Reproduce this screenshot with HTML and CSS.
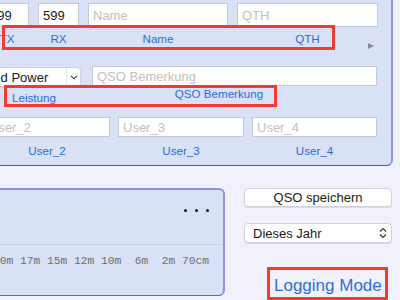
FILE: index.html
```html
<!DOCTYPE html>
<html lang="de">
<head>
  <meta charset="UTF-8">
  <meta name="viewport" content="width=device-width, initial-scale=1.0">
  <title>QSO Logging</title>
  <link rel="stylesheet" href="styles.css">
</head>
<body>
  <!-- QSO entry panel -->
  <div class="entry-panel">
    <div class="grid-call">
      <input type="text" class="field" value="599">
      <input type="text" class="field" value="599">
      <input type="text" class="field" placeholder="Name">
      <input type="text" class="field" placeholder="QTH">
    </div>
    <div class="grid-call labels-call">
      <span class="tag">TX</span>
      <span class="tag">RX</span>
      <span class="tag">Name</span>
      <span class="tag tag-qth">
        <span></span>
        <span>QTH</span>
        <span class="disclosure"></span>
      </span>
    </div>

    <div class="row-power">
      <div class="popup">
        <span class="popup-text">Fixed Power</span>
        <span class="popup-arrow">
          <svg width="8" height="5" viewBox="0 0 8 5"><path d="M1 0.8 L4 3.8 L7 0.8" fill="none" stroke="#333" stroke-width="1.1"/></svg>
        </span>
      </div>
      <input type="text" class="field field-note" placeholder="QSO Bemerkung">
    </div>
    <div class="labels-power">
      <span class="tag tag-power">Leistung</span>
      <span class="tag tag-note">QSO Bemerkung</span>
    </div>

    <div class="grid-user">
      <input type="text" class="field" placeholder="User_2">
      <input type="text" class="field" placeholder="User_3">
      <input type="text" class="field" placeholder="User_4">
    </div>
    <div class="grid-user labels-user">
      <span class="tag">User_2</span>
      <span class="tag">User_3</span>
      <span class="tag">User_4</span>
    </div>

    <!-- annotation frames -->
    <div class="mark mark-call"></div>
    <div class="mark mark-power"></div>
  </div>

  <div class="bottom">
    <!-- band overview -->
    <div class="band-panel">
      <div class="band-head">
        <span class="dot"></span><span class="dot"></span><span class="dot"></span>
      </div>
      <div class="band-list">20m 17m 15m 12m 10m  6m  2m 70cm</div>
    </div>

    <div class="side">
      <button class="btn">QSO speichern</button>
      <div class="stepper">
        <span>Dieses Jahr</span>
        <svg width="8" height="12" viewBox="0 0 8 12"><path d="M1 4.5 L4 1.5 L7 4.5 M1 7.5 L4 10.5 L7 7.5" fill="none" stroke="#333" stroke-width="1.1"/></svg>
      </div>
      <div class="mode-box">
        <a class="mode-link" href="#">Logging Mode</a>
      </div>
    </div>
  </div>
</body>
</html>
```

FILE: styles.css
```css
/* General */
body {
  margin: 0;
  padding: 0;
  width: 400px;
  height: 300px;
  overflow: hidden;
  background-color: #f1f1fb;
  font-family: "Liberation Sans", Arial, sans-serif;
}

.entry-panel {
  position: relative;
  box-sizing: border-box;
  width: 393px;
  height: 166px;
  padding-top: 3px;
  background: #d8e1f5;
  border-right: 2px solid #9193e2;
  border-bottom: 1px solid #4a56d8;
  border-bottom-right-radius: 6px;
}

.field {
  box-sizing: border-box;
  height: 24px;
  padding: 0 4px;
  font-family: inherit;
  font-size: 13px;
  color: #1a1a1a;
  background: #fff;
  border: 1px solid #c4c9d6;
  border-radius: 0;
  outline: none;
  width: 100%;
}

.field::placeholder {
  color: #c2c2c2;
}

.tag {
  font-size: 11.6px;
  line-height: 13px;
  color: #2b6cdd;
  text-align: center;
}

/* first row: TX / RX / Name / QTH */
.grid-call {
  display: grid;
  grid-template-columns: 44px 41px 140px 141px;
  column-gap: 9px;
  margin-left: -15px;
}

.labels-call {
  height: 18px;
  margin-top: 5px;
}

.tag-qth {
  display: grid;
  grid-template-columns: 1fr auto 1fr;
}

.disclosure {
  justify-self: end;
  align-self: end;
  width: 0;
  height: 0;
  margin: 0 4px 1px 0;
  border-top: 3.5px solid transparent;
  border-bottom: 3.5px solid transparent;
  border-left: 6px solid #8c8c8c;
}

/* second row: power / remark */
.row-power {
  display: flex;
  align-items: flex-start;
  margin-top: 16px;
  margin-left: -30px;
}

.popup {
  box-sizing: border-box;
  display: flex;
  align-items: center;
  width: 111px;
  height: 20px;
  margin-top: 1px;
  background: #fff;
  border: 1px solid #cfd3dc;
  border-radius: 4px;
  box-shadow: 0 1px 1px rgba(0, 0, 0, 0.08);
  font-size: 13px;
  color: #1a1a1a;
}

.popup-text {
  flex: 1;
  padding-left: 5px;
}

.popup-arrow {
  display: flex;
  align-items: center;
  justify-content: center;
  width: 13px;
  height: 100%;
  border-left: 1px solid #e4e6ec;
}

.field-note {
  width: 285px;
  height: 20px;
  margin-left: 11px;
}

.labels-power {
  display: flex;
  align-items: flex-start;
  height: 20px;
}

.tag-power {
  margin: 4px 0 0 12px;
}

.tag-note {
  margin-left: 119px;
}

/* third row: user fields */
.grid-user {
  display: grid;
  grid-template-columns: 126px 126px 125px;
  column-gap: 8px;
  margin-left: -16px;
}

.grid-user .field {
  height: 20px;
  margin-top: 10px;
}

.labels-user {
  margin-top: 7px;
}

/* red annotation frames */
.mark {
  position: absolute;
  border: 3px solid #f23b2f;
}

.mark-call {
  left: 2px;
  top: 25px;
  width: 327px;
  height: 19px;
}

.mark-power {
  left: 4px;
  top: 85px;
  width: 267px;
  height: 16px;
}

/* lower area */
.bottom {
  display: flex;
  align-items: flex-start;
  margin-top: 22px;
}

.band-panel {
  box-sizing: border-box;
  width: 245px;
  height: 108px;
  margin-left: -20px;
  background: #d8e1f5;
  border-top: 2px solid #9193e2;
  border-right: 2px solid #9193e2;
  border-bottom: 1px solid #5b63dc;
  border-radius: 0 6px 6px 0;
}

.band-head {
  display: flex;
  justify-content: flex-end;
  gap: 8px;
  height: 55px;
  padding: 19px 14px 0 0;
  box-sizing: border-box;
  border-bottom: 1px solid #c6cfe5;
}

.dot {
  width: 3px;
  height: 3px;
  border-radius: 50%;
  background: #111;
}

.band-list {
  margin: 10px 0 0 13px;
  font-family: "Liberation Mono", "Courier New", monospace;
  font-size: 11.25px;
  line-height: 13px;
  color: #6e6e6e;
  white-space: pre;
}

.side {
  display: flex;
  flex-direction: column;
  width: 148px;
  margin-left: 19px;
}

.btn {
  height: 19px;
  padding: 0;
  font-family: inherit;
  font-size: 13px;
  color: #1a1a1a;
  background: #fff;
  border: 1px solid #cfd2da;
  border-radius: 4px;
  box-shadow: 0 1px 1px rgba(0, 0, 0, 0.1);
}

.stepper {
  box-sizing: border-box;
  display: flex;
  align-items: center;
  justify-content: space-between;
  height: 20px;
  margin-top: 16px;
  padding: 0 4px 0 8px;
  font-size: 13px;
  color: #1a1a1a;
  background: #fff;
  border: 1px solid #cfd2da;
  border-radius: 4px;
  box-shadow: 0 1px 1px rgba(0, 0, 0, 0.1);
}

.mode-box {
  box-sizing: border-box;
  width: 121px;
  height: 33px;
  margin: 24px 0 0 23px;
  padding: 6px 0 0 4px;
  border: 3px solid #f23b2f;
}

.mode-link {
  font-size: 17px;
  line-height: 20px;
  color: #2a6ddf;
  text-decoration: none;
}
```
